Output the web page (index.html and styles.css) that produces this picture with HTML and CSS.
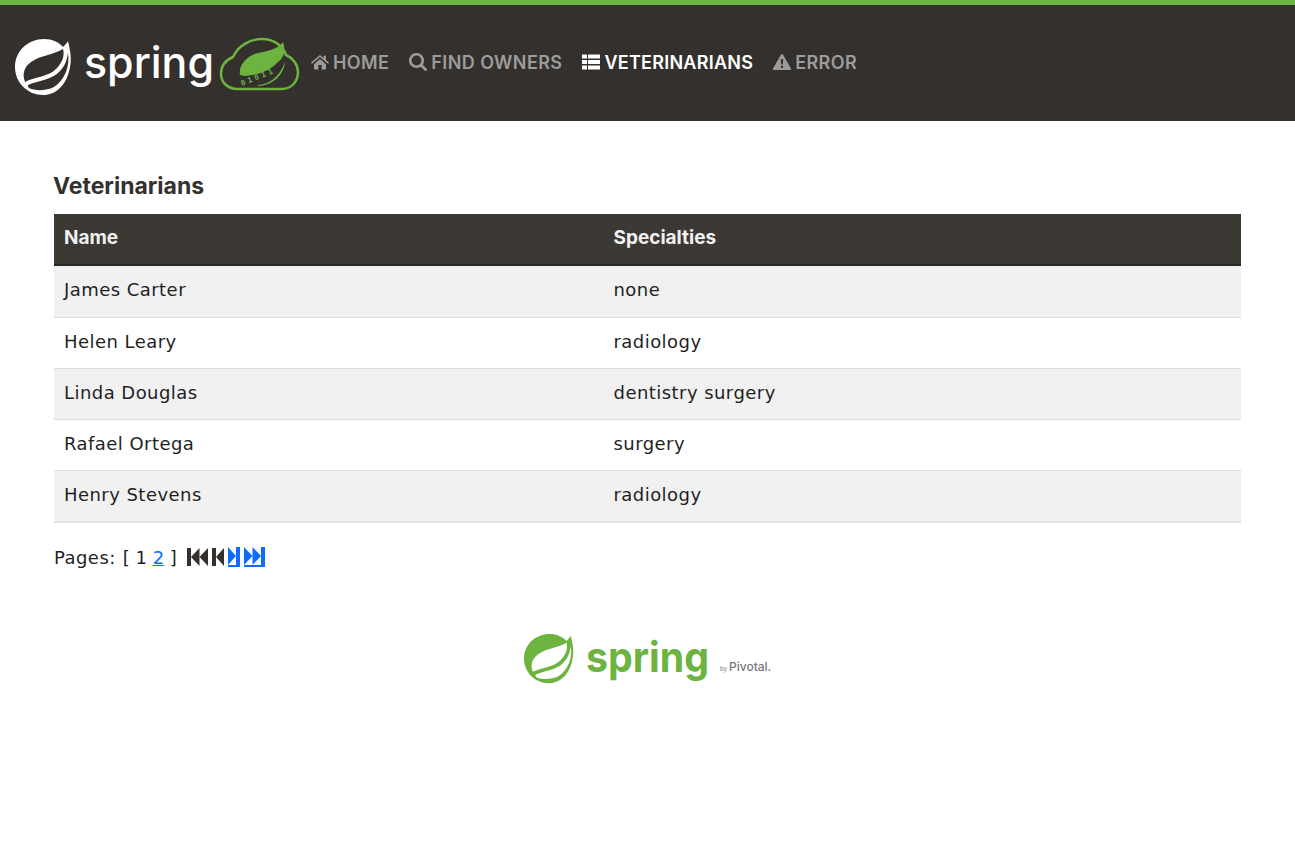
FILE: index.html
```html
<!DOCTYPE html>
<html>
<head>
    <title>PetClinic :: a Spring Framework demonstration</title>
    <link rel="stylesheet" href="styles.css">
</head>
<body>
    <svg class="defs" width="0" height="0">
        <symbol id="leaf" viewBox="0 0 60 60">
            <path fill-rule="evenodd" d="M53 3C55 12 57 20 55 29C52 47 41 57 28 57C13 57 0 45 0 29C0 13 13 1 29 1C37 1 44 4 48 9C50 7 52 5 53 3ZM10 44C7 36 9 29 16 24C26 17 38 17 48 11C50 18 47 25 41 31C33 39 19 39 10 44ZM13 47C25 42 37 42 45 33C50 28 52 22 53 15C55 28 50 42 39 49C31 53 20 53 14 50C13 49 13 48 13 47Z"/>
        </symbol>
    </svg>

    <nav class="navbar">
        <a class="brand" href="#">
            <svg class="brand-logo" viewBox="0 0 300 116" width="300" height="116">
                <use href="#leaf" x="15" y="33" width="60" height="60" fill="#fff"/>
                <text x="84" y="73" class="brand-word" textLength="130" lengthAdjust="spacingAndGlyphs">spring</text>
                <path class="cloud" d="M238 84C227 84 221 77 221 69C221 61 226 55 233 52C238 41 250 34 262 34C274 34 283 41 286 50C293 53 298 60 298 67C298 77 291 84 282 84Z"/>
                <path fill="#6db33f" d="M283 37C278 44 268 46 258 48C248 50 238 60 240 70L245 71C258 70 269 66 277 58C284 53 286 46 283 37Z"/>
                <path fill="#6db33f" d="M258 80C269 79 279 73 285 57C284 68 275 80 258 81Z"/>
                <text class="bits" transform="translate(242 81) rotate(-22)">01011</text>
            </svg>
        </a>
        <ul class="nav-links">
            <li><a href="#">
                <svg class="nav-icon" viewBox="0 0 18 16"><path d="M9 1L0 8.6L1 9.8L9 3L17 9.8L18 8.6L15 6V1.8H12.5V3.9ZM3 10.2V15.5H7.3V11H10.7V15.5H15V10.2L9 5Z"/></svg>HOME
            </a></li>
            <li><a href="#">
                <svg class="nav-icon" viewBox="0 0 18 18"><path fill-rule="evenodd" d="M7.5 0A7.5 7.5 0 1 0 11.7 13.7L15.6 17.6A1.4 1.4 0 0 0 17.6 15.6L13.7 11.7A7.5 7.5 0 0 0 7.5 0ZM7.5 2.6A4.9 4.9 0 1 1 7.5 12.4A4.9 4.9 0 0 1 7.5 2.6Z"/></svg>FIND OWNERS
            </a></li>
            <li class="active"><a href="#">
                <svg class="nav-icon" viewBox="0 0 18 15"><path d="M0 0H5V4H0ZM6 0H18V4H6ZM0 5.5H5V9.500H0ZM6 5.500H18V9.500H6ZM0 11H5V15H0ZM6 11H18V15H6Z"/></svg>VETERINARIANS
            </a></li>
            <li><a href="#">
                <svg class="nav-icon" viewBox="0 0 18 16"><path fill-rule="evenodd" d="M9 0C9.500 0 9.900 .3 10.100 .7L17.800 14.300C18.300 15.100 17.700 16 16.800 16H1.200C.3 16 -.3 15.100 .2 14.300L7.900 .7C8.100 .3 8.500 0 9 0ZM7.800 5L8.100 10.500H9.900L10.200 5ZM7.900 11.700V14H10.100V11.700Z"/></svg>ERROR
            </a></li>
        </ul>
    </nav>

    <div class="container">
        <h2>Veterinarians</h2>
        <table class="vets">
            <thead>
                <tr><th class="col-name">Name</th><th>Specialties</th></tr>
            </thead>
            <tbody>
                <tr><td>James Carter</td><td>none</td></tr>
                <tr><td>Helen Leary</td><td>radiology</td></tr>
                <tr><td>Linda Douglas</td><td>dentistry surgery</td></tr>
                <tr><td>Rafael Ortega</td><td>surgery</td></tr>
                <tr><td>Henry Stevens</td><td>radiology</td></tr>
            </tbody>
        </table>

        <div class="pager">
            <span>Pages:</span>
            <span class="pages">[ 1 <a href="#">2</a> ]</span>
            <span class="pager-icons">
                <svg class="fast" viewBox="0 0 21 18"><path d="M0 0H4V18H0ZM4 9L12.500 0V18ZM12.500 9L21 0V18Z"/></svg>
                <svg class="step" viewBox="0 0 12 18"><path d="M0 0H4V18H0ZM4 9L12 0V18Z"/></svg>
                <a href="#"><svg class="step" viewBox="0 0 12 18"><path d="M0 0L8 9L0 18ZM8 0H12V18H8Z"/></svg></a>
                <a href="#"><svg class="fast" viewBox="0 0 21 18"><path d="M0 0L8.500 9L0 18ZM8.500 0L17 9L8.500 18ZM17 0H21V18H17Z"/></svg></a>
            </span>
        </div>

        <div class="footer-logo">
            <svg viewBox="0 0 248 60" width="248" height="60">
                <use href="#leaf" x="0" y="5" width="53" height="53" fill="#6db33f"/>
                <text x="62" y="44" class="footer-word" textLength="123" lengthAdjust="spacingAndGlyphs">spring</text>
                <text x="196" y="43" class="by">by</text>
                <text x="205" y="43" class="pivotal">Pivotal.</text>
            </svg>
        </div>
    </div>
</body>
</html>
```

FILE: styles.css
```css
body {
    font-family: "DejaVu Sans", "Noto Sans", sans-serif;
    font-size: 18px;
    letter-spacing: 0.450px;
    color: #1f1f1f;
    background-color: #fff;
    margin: 0;
}

a {
    color: #0d6efd;
}

.defs {
    display: block;
}

/* top bar */
.navbar {
    display: flex;
    align-items: center;
    height: 116px;
    background-color: #34302d;
    border-top: 5px solid #6db33f;
}

.brand {
    display: block;
    height: 116px;
}

.brand-logo {
    display: block;
}

.brand-word {
    font-family: Inter, sans-serif;
    font-size: 43px;
    font-weight: 500;
    letter-spacing: 0;
    fill: #fff;
}

.cloud {
    fill: none;
    stroke: #6db33f;
    stroke-width: 2.500;
}

.bits {
    font-family: "DejaVu Sans Mono", monospace;
    font-size: 7.500px;
    font-weight: 700;
    letter-spacing: 2.800px;
    fill: #6db33f;
}

.nav-links {
    display: flex;
    gap: 20px;
    list-style: none;
    margin: 0 0 0 11px;
    padding: 0 0 2px;
}

.nav-links a {
    display: flex;
    align-items: center;
    gap: 4px;
    font-family: Inter, sans-serif;
    font-size: 18px;
    font-weight: 600;
    letter-spacing: 0.400px;
    color: #9c9c9b;
    text-decoration: none;
}

.nav-links .active a {
    color: #fff;
    letter-spacing: 0.250px;
}

.nav-icon {
    width: 18px;
    height: 18px;
    fill: currentColor;
}

/* page */
.container {
    padding: 0 54px;
}

h2 {
    font-family: Inter, sans-serif;
    font-size: 23px;
    font-weight: 700;
    line-height: 26px;
    letter-spacing: 0;
    color: #34302d;
    margin: 52px 0 15px -1px;
}

.vets {
    width: 100%;
    border-collapse: collapse;
    table-layout: fixed;
}

.vets th {
    height: 51px;
    padding: 0 10px 3px;
    box-sizing: border-box;
    text-align: left;
    font-family: Inter, sans-serif;
    font-size: 19px;
    font-weight: 700;
    letter-spacing: 0;
    color: #f1f1f1;
    background-color: #3c3834;
    border-bottom: 2px solid #2a2724;
}

.vets .col-name {
    width: 549.500px;
}

.vets td {
    height: 51px;
    padding: 0 10px 2px;
    box-sizing: border-box;
    border-bottom: 1px solid #ddd;
}

.vets tbody tr:nth-child(odd) {
    background-color: #f1f1f1;
}

.vets tbody tr:first-child td {
    height: 52px;
    padding-bottom: 4px;
}

.vets tbody tr:last-child td {
    height: 52px;
    padding-bottom: 3px;
    border-bottom: 2px solid #e2e2e2;
}

/* paging */
.pager {
    display: flex;
    align-items: center;
    gap: 7px;
    height: 26px;
    margin-top: 21px;
}

.pages {
    letter-spacing: 0;
}

.pager-icons {
    display: flex;
    align-items: center;
    gap: 4px;
    margin-left: 3px;
    fill: #34302d;
}

.pager-icons svg {
    display: block;
    height: 18px;
}

.pager-icons .fast {
    width: 21px;
}

.pager-icons .step {
    width: 12px;
}

.pager-icons a {
    display: block;
    fill: #0d6efd;
    border-bottom: 2px solid #0d6efd;
}

/* footer */
.footer-logo {
    display: flex;
    justify-content: center;
    margin-top: 58px;
}

.footer-word {
    font-family: Inter, sans-serif;
    font-size: 42px;
    font-weight: 700;
    letter-spacing: 0;
    fill: #6db33f;
}

.by {
    font-family: Inter, sans-serif;
    font-size: 6px;
    letter-spacing: 0;
    fill: #777;
}

.pivotal {
    font-family: Inter, sans-serif;
    font-size: 12px;
    font-weight: 500;
    letter-spacing: 0;
    fill: #777;
}
```
